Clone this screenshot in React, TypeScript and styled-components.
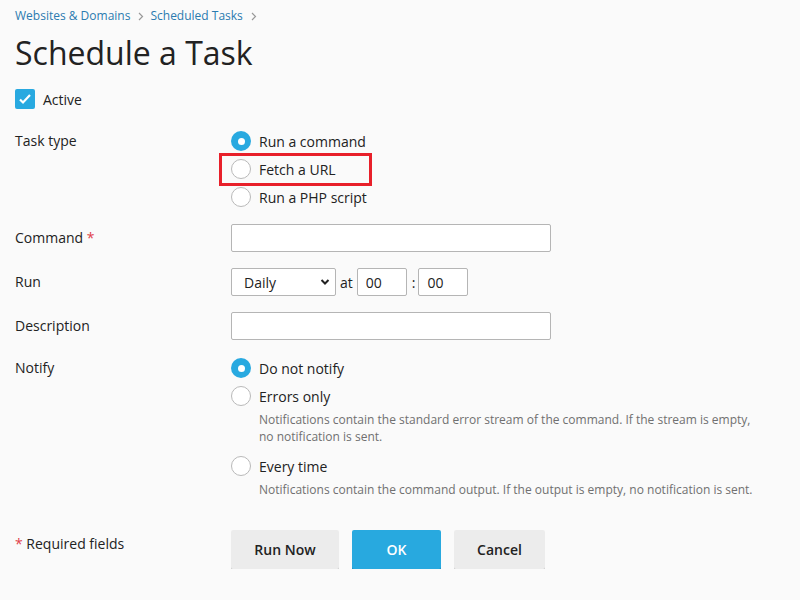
import React from "react";
import styled, { createGlobalStyle } from "styled-components";

const Global = createGlobalStyle`
  html, body { margin: 0; padding: 0; background: #fafafa; }
  body { font-family: "Open Sans", "Liberation Sans", sans-serif; color: #222; font-size: 14px; }
  * { box-sizing: border-box; }
`;

const Page = styled.div`
  padding: 8px 15px 0 15px;
`;

const Breadcrumbs = styled.nav`
  display: flex;
  align-items: center;
  height: 16px;
  font-size: 12px;
  line-height: 16px;
`;

const Crumb = styled.a`
  color: #2b7bb0;
  text-decoration: none;
`;

const Sep = styled.span`
  display: inline-flex;
  align-items: center;
  margin: 0 6px 0 8px;
  color: #999;
`;

const Title = styled.h1`
  margin: 9px 0 0 0;
  font-size: 32px;
  font-weight: 400;
  line-height: 40px;
  color: #222;
`;

const ActiveRow = styled.label`
  display: flex;
  align-items: center;
  gap: 8px;
  margin-top: 16px;
  height: 20px;
`;

const Checkbox = styled.span`
  width: 20px;
  height: 20px;
  border-radius: 2px;
  background: #28a9e0;
  display: inline-flex;
  align-items: center;
  justify-content: center;
`;

const Form = styled.div`
  display: flex;
  flex-direction: column;
  gap: 16px;
  margin-top: 20px;
`;

const Row = styled.div<{ $after?: number }>`
  display: flex;
  align-items: flex-start;
  margin-bottom: ${(p) => p.$after ?? 0}px;
`;

const Label = styled.div<{ $h?: number }>`
  width: 216px;
  flex: none;
  line-height: ${(p) => p.$h ?? 28}px;
  height: ${(p) => p.$h ?? 28}px;
`;

const Req = styled.span`
  color: #e0404a;
`;

const Field = styled.div`
  display: flex;
  flex-direction: column;
`;

const RadioGroup = styled.div`
  display: flex;
  flex-direction: column;
`;

const RadioItem = styled.label<{ $gap?: number }>`
  display: flex;
  align-items: center;
  gap: 8px;
  height: 24px;
  margin-top: ${(p) => p.$gap ?? 0}px;
`;

const RadioCircle = styled.span<{ $on?: boolean }>`
  width: 20px;
  height: 20px;
  border-radius: 50%;
  flex: none;
  background: ${(p) => (p.$on ? "#28a9e0" : "#fff")};
  border: ${(p) => (p.$on ? "none" : "1px solid #b9b9b9")};
  display: inline-flex;
  align-items: center;
  justify-content: center;
  &::after {
    content: "";
    display: ${(p) => (p.$on ? "block" : "none")};
    width: 7px;
    height: 7px;
    border-radius: 50%;
    background: #fff;
  }
`;

const Highlight = styled.div`
  border: 3px solid #e8202a;
  margin: 0 0 0 -12px;
  padding: 1px 0 2px 9px;
  width: 153px;
`;

const Help = styled.div`
  margin: 3px 0 0 28px;
  font-size: 12px;
  line-height: 17px;
  color: #707070;
  width: 500px;
`;

const TextInput = styled.input<{ $w: number }>`
  width: ${(p) => p.$w}px;
  height: 28px;
  border: 1px solid #b5b5b5;
  border-radius: 2px;
  background: #fff;
  font-family: inherit;
  font-size: 14px;
  color: #222;
  padding: 0 8px;
  outline: none;
`;

const Inline = styled.div`
  display: flex;
  align-items: center;
`;

const SelectBox = styled.div`
  width: 105px;
  height: 28px;
  border: 1px solid #b5b5b5;
  border-radius: 2px;
  background: #fff;
  display: flex;
  align-items: center;
  justify-content: space-between;
  padding: 0 5px 0 12px;
  font-size: 14px;
`;

const Joiner = styled.span<{ $ml: number; $mr: number }>`
  margin: 0 ${(p) => p.$mr}px 0 ${(p) => p.$ml}px;
`;

const Footer = styled.div`
  display: flex;
  align-items: flex-start;
  margin-top: 32px;
`;

const FooterNote = styled.div`
  width: 216px;
  line-height: 28px;
  flex: none;
`;

const Buttons = styled.div`
  display: flex;
  gap: 13px;
`;

const Button = styled.button<{ $primary?: boolean; $w: number }>`
  width: ${(p) => p.$w}px;
  height: 39px;
  border: none;
  border-radius: 2px;
  font-family: inherit;
  font-size: 14px;
  font-weight: 600;
  color: ${(p) => (p.$primary ? "#fff" : "#222")};
  background: ${(p) => (p.$primary ? "#28a9df" : "#ececec")};
  box-shadow: 0 2px 0 ${(p) => (p.$primary ? "#1e88b8" : "#c9c9c9")};
  cursor: pointer;
`;

const Chevron = () => (
  <svg width="6" height="9" viewBox="0 0 6 9">
    <path d="M1 1l3.5 3.5L1 8" fill="none" stroke="#999" strokeWidth="1.2" />
  </svg>
);

const Radio = ({ on, children, gap }: { on?: boolean; children: React.ReactNode; gap?: number }) => (
  <RadioItem $gap={gap}>
    <RadioCircle $on={on} />
    <span>{children}</span>
  </RadioItem>
);

export default function App() {
  return (
    <>
      <Global />
      <Page>
        <Breadcrumbs>
          <Crumb>Websites &amp; Domains</Crumb>
          <Sep><Chevron /></Sep>
          <Crumb>Scheduled Tasks</Crumb>
          <Sep><Chevron /></Sep>
        </Breadcrumbs>
        <Title>Schedule a Task</Title>
        <ActiveRow>
          <Checkbox>
            <svg width="14" height="14" viewBox="0 0 14 14">
              <path d="M2 7.5l3 3 7-7.5" fill="none" stroke="#fff" strokeWidth="2.2" />
            </svg>
          </Checkbox>
          <span>Active</span>
        </ActiveRow>
        <Form>
          <Row $after={-1}>
            <Label $h={24}>Task type</Label>
            <RadioGroup>
              <Radio on>Run a command</Radio>
              <Highlight>
                <Radio>Fetch a URL</Radio>
              </Highlight>
              <Radio gap={-1}>Run a PHP script</Radio>
            </RadioGroup>
          </Row>
          <Row>
            <Label>Command <Req>*</Req></Label>
            <TextInput $w={320} />
          </Row>
          <Row>
            <Label>Run</Label>
            <Inline>
              <SelectBox>
                <span>Daily</span>
                <svg width="10" height="8" viewBox="0 0 10 8">
                  <path d="M1.5 2l3.5 3.5L8.5 2" fill="none" stroke="#222" strokeWidth="2" />
                </svg>
              </SelectBox>
              <Joiner $ml={4} $mr={4}>at</Joiner>
              <TextInput $w={50} defaultValue="00" />
              <Joiner $ml={5} $mr={3}>:</Joiner>
              <TextInput $w={50} defaultValue="00" />
            </Inline>
          </Row>
          <Row>
            <Label>Description</Label>
            <TextInput $w={320} />
          </Row>
          <Row>
            <Label $h={24}>Notify</Label>
            <Field>
              <Radio on>Do not notify</Radio>
              <Radio gap={4}>Errors only</Radio>
              <Help>
                Notifications contain the standard error stream of the command. If the stream is empty, no notification is sent.
              </Help>
              <Radio gap={9}>Every time</Radio>
              <Help>
                Notifications contain the command output. If the output is empty, no notification is sent.
              </Help>
            </Field>
          </Row>
        </Form>
        <Footer>
          <FooterNote><Req>*</Req> Required fields</FooterNote>
          <Buttons>
            <Button $w={108}>Run Now</Button>
            <Button $w={89} $primary>OK</Button>
            <Button $w={91}>Cancel</Button>
          </Buttons>
        </Footer>
      </Page>
    </>
  );
}
